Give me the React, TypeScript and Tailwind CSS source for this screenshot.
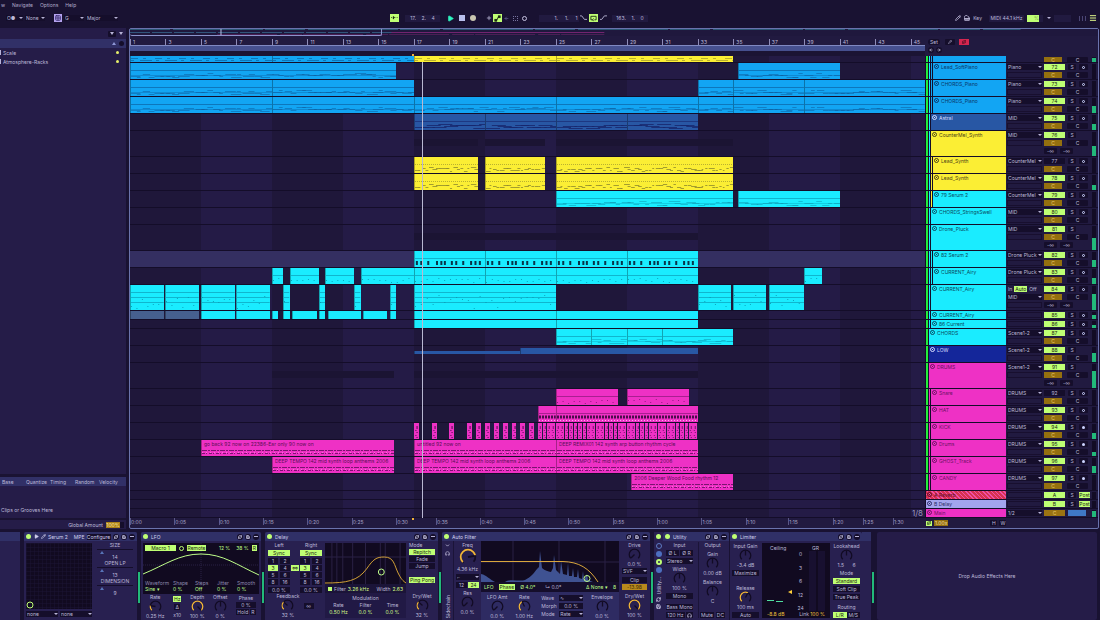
import { clsx } from "clsx";
import {
  ArrowLeft,
  ArrowRight,
  ChevronDown,
  Grid2x2,
  Headphones,
  Menu,
  Pencil,
  Piano,
  Play,
  Plus,
  RefreshCw,
  Repeat,
  Save,
} from "lucide-react";
import type { ReactNode } from "react";

const BARS = 44.8;
const pct = (bars: number) => `${(bars / BARS) * 100}%`;

type Tone = "blue" | "navy" | "yellow" | "cyan" | "pink" | "slate" | "lavender" | "rose" | "deep";
type NoteKind = "lines" | "dots" | "beats" | "melody" | "kick" | "hats" | "audio" | "steps" | "plain";
type ClipData = { from: number; to: number; tone: Tone; kind?: NoteKind; text?: string; thin?: boolean };
type Track = {
  name: string;
  tone: Tone;
  size: "cut" | "sm" | "md" | "lg";
  depth: number;
  parent?: Tone;
  io?: string;
  monitor?: boolean;
  num: string;
  off?: boolean;
  arm?: "midi" | "audio";
  post?: boolean;
  main?: boolean;
  level: number;
  clips: ClipData[];
  ghost?: [number, number][];
  selected?: boolean;
};

const toneBg: Record<Tone, string> = {
  blue: "bg-[#12a5f3]",
  navy: "bg-[#2857a4]",
  yellow: "bg-[#fbee34]",
  cyan: "bg-[#1aecff]",
  pink: "bg-[#ee31c5]",
  slate: "bg-[#46608f]",
  lavender: "bg-[#a3a5ee]",
  rose: "bg-[repeating-linear-gradient(45deg,#ee4fa8_0_1px,#d8324f_1px_3px)]",
  deep: "bg-[#14269a]",
};

const toneInk: Record<Tone, string> = {
  blue: "#0b5a99",
  navy: "#16256c",
  yellow: "#8f8a2c",
  cyan: "#0a93ae",
  pink: "#7c1470",
  slate: "#32447c",
  lavender: "#4a4a92",
  rose: "#7c1440",
  deep: "#0c1668",
};

const toneText: Record<Tone, string> = {
  blue: "text-[#0b3768]",
  navy: "text-[#d7dcff]",
  yellow: "text-[#4a4218]",
  cyan: "text-[#0a4a60]",
  pink: "text-[#6d1263]",
  slate: "text-[#d7dcff]",
  lavender: "text-[#2c2a66]",
  rose: "text-[#5a0a2a]",
  deep: "text-[#d7dcff]",
};

const many = (tone: Tone, kind: NoteKind, spans: [number, number][], text?: string): ClipData[] =>
  spans.map(([from, to]) => ({ from, to, tone, kind, text }));

const synthSpans: [number, number][] = [[17, 20.6], [21, 24.4], [25, 35]];

const tracks: Track[] = [
  { name: "", tone: "blue", size: "cut", depth: 2, parent: "blue", num: "71", level: 0.8,
    clips: [...many("blue", "lines", [[1, 9], [9, 17]]), ...many("yellow", "melody", [[17, 25], [25, 35]])] },
  { name: "Lead_SoftPiano", tone: "blue", size: "md", depth: 2, parent: "blue", io: "Piano", num: "72", arm: "midi", level: 0,
    clips: many("blue", "lines", [[1, 16], [35.25, 41]]) },
  { name: "CHORDS_Piano", tone: "blue", size: "md", depth: 2, parent: "blue", io: "Piano", num: "73", arm: "midi", level: 0,
    clips: many("blue", "lines", [[1, 9], [9, 17], [33, 35], [35, 39], [39, 45.8]]) },
  { name: "CHORDS_Piano", tone: "blue", size: "md", depth: 2, parent: "blue", io: "Piano", num: "74", arm: "midi", level: 0.5,
    clips: many("blue", "lines", [[1, 9], [9, 17], [17, 25], [25, 33], [33, 35], [35, 39], [39, 45.8]]) },
  { name: "Astral", tone: "navy", size: "md", depth: 1, io: "MID", num: "75", arm: "midi", level: 0.4,
    clips: many("navy", "steps", [[17, 21], [21, 25], [25, 29], [29, 33]]) },
  { name: "CounterMel_Synth", tone: "yellow", size: "lg", depth: 1, io: "MID", num: "76", level: 0.4, clips: [],
    ghost: [[17, 20.6], [21, 24.4], [25, 35]] },
  { name: "Lead_Synth", tone: "yellow", size: "md", depth: 2, parent: "yellow", io: "CounterMel", num: "77", off: true, arm: "midi", level: 0,
    clips: many("yellow", "melody", synthSpans) },
  { name: "Lead_Synth", tone: "yellow", size: "md", depth: 2, parent: "yellow", io: "CounterMel", num: "78", arm: "midi", level: 0.35,
    clips: many("yellow", "melody", synthSpans) },
  { name: "79 Serum 2", tone: "cyan", size: "md", depth: 2, parent: "yellow", io: "CounterMel", num: "79", arm: "midi", level: 0,
    clips: many("cyan", "lines", [[25, 35], [35.25, 41]]) },
  { name: "CHORDS_StringsSwell", tone: "cyan", size: "md", depth: 1, io: "MID", num: "80", arm: "midi", level: 0, clips: [] },
  { name: "Drone_Pluck", tone: "cyan", size: "lg", depth: 1, io: "MID", num: "81", level: 0.5, clips: [], ghost: [[17, 25], [25, 33]] },
  { name: "82 Serum 2", tone: "cyan", size: "md", depth: 2, parent: "cyan", io: "Drone Pluck", num: "82", arm: "midi", level: 0.45, selected: true,
    clips: many("cyan", "beats", [[17, 21], [21, 25], [25, 29], [29, 33]]) },
  { name: "CURRENT_Airy", tone: "cyan", size: "md", depth: 2, parent: "cyan", io: "Drone Pluck", num: "83", arm: "midi", level: 0.4,
    clips: many("cyan", "dots", [[9, 9.65], [10, 11.65], [12, 13.65], [14, 17], [17, 21], [21, 25], [25, 29], [29, 33], [39, 40]]) },
  { name: "CURRENT_Airy", tone: "cyan", size: "lg", depth: 1, io: "MID", monitor: true, num: "84", arm: "midi", level: 0.65,
    clips: many("cyan", "dots", [[1, 2.9], [3, 4.9], [5, 6.9], [7, 8.9], [9.65, 10], [11.65, 12], [13.65, 14], [15.65, 16], [17, 25], [33, 34.85], [35, 36.85], [37, 39]]) },
  { name: "CURRENT_Airy", tone: "cyan", size: "sm", depth: 1, num: "85", arm: "midi", level: 0.6,
    clips: [
      ...many("slate", "plain", [[1, 2.9], [3, 4.9]]),
      ...many("cyan", "plain", [[5, 6.9], [7, 8.9], [9, 9.35], [9.65, 10], [10.15, 11.55], [11.65, 12], [12.15, 14], [14.15, 15.5], [15.65, 16], [17, 25], [25, 33]]),
    ] },
  { name: "86 Current", tone: "cyan", size: "sm", depth: 1, num: "86", arm: "midi", level: 0.5,
    clips: many("cyan", "plain", [[17, 25], [25, 33]]) },
  { name: "CHORDS", tone: "cyan", size: "md", depth: 0, io: "Scene1-2", num: "87", arm: "midi", level: 0,
    clips: many("cyan", "lines", [[25, 27], [27, 29], [29, 31], [31, 35]]) },
  { name: "LOW", tone: "deep", size: "md", depth: 0, io: "Scene1-2", num: "88", level: 0.6,
    clips: [{ from: 17, to: 23, tone: "navy", thin: true }, { from: 23, to: 33, tone: "navy", thin: true }] },
  { name: "DRUMS", tone: "pink", size: "lg", depth: 0, io: "Scene1-2", num: "91", level: 0.7, clips: [],
    ghost: [[9, 15.9], [17, 21], [21, 25], [25, 33]] },
  { name: "Snare", tone: "pink", size: "md", depth: 1, parent: "pink", io: "DRUMS", num: "92", off: true, arm: "midi", level: 0,
    clips: many("pink", "dots", [[25, 28.5], [29, 32.5]]) },
  { name: "HAT", tone: "pink", size: "md", depth: 1, parent: "pink", io: "DRUMS", num: "93", arm: "midi", level: 0,
    clips: many("pink", "hats", [[24, 25], [25, 33]]) },
  { name: "KICK", tone: "pink", size: "md", depth: 1, parent: "pink", io: "DRUMS", num: "94", arm: "audio", level: 0.4,
    clips: [
      ...[17, 18, 19, 20, 20.5, 21, 21.5, 22, 22.5, 23, 23.5].map((b): ClipData => ({ from: b, to: b + 0.28, tone: "pink", kind: "kick" })),
      ...Array.from({ length: 36 }, (_, i): ClipData => ({ from: 24 + i / 4, to: 24.21 + i / 4, tone: "pink", kind: "kick" })),
    ] },
  { name: "Drums", tone: "pink", size: "md", depth: 1, parent: "pink", io: "DRUMS", num: "95", arm: "audio", level: 0.3,
    clips: [
      { from: 5, to: 15.9, tone: "pink", kind: "audio", text: "go back 92 now on 22386-Ear only 90 now on" },
      { from: 17, to: 25, tone: "pink", kind: "audio", text: "untitled 92 now on" },
      { from: 25, to: 33, tone: "pink", kind: "audio", text: "DEEP REMIX01 142 synth arp button rhythm cycle" },
    ] },
  { name: "GHOST_Track", tone: "pink", size: "md", depth: 1, parent: "pink", io: "DRUMS", num: "96", arm: "audio", level: 0.5,
    clips: many("pink", "audio", [[9, 15.9], [17, 25], [25, 33]], "DEEP TEMPO 142 mid synth loop anthems 2006") },
  { name: "CANDY", tone: "pink", size: "md", depth: 1, parent: "pink", io: "DRUMS", num: "97", arm: "audio", level: 0,
    clips: many("pink", "audio", [[29.25, 35]], "2006 Deeper Wood Food rhythm 12") },
  { name: "A Reverb", tone: "rose", size: "sm", depth: 0, num: "A", post: true, level: 0, clips: [] },
  { name: "B Delay", tone: "lavender", size: "sm", depth: 0, num: "B", post: true, level: 0, clips: [] },
  { name: "Main", tone: "pink", size: "sm", depth: 0, io: "1/2", num: "C", main: true, level: 0.8, clips: [] },
];

const rowHeight = { cut: "h-[7px] items-end", sm: "h-[9px]", md: "h-[17px]", lg: "h-[26px]" };

const timeMarks: [string, number][] = [
  ["0:00", 0], ["0:05", 2.5], ["0:10", 5], ["0:15", 7.5], ["0:20", 10], ["0:25", 12.5], ["0:30", 15],
  ["0:35", 17.25], ["0:40", 19.75], ["0:45", 22.2], ["0:50", 24.7], ["0:55", 27.2], ["1:00", 29.7],
  ["1:05", 32.2], ["1:10", 34.7], ["1:15", 37.1], ["1:20", 39.6], ["1:25", 41.3], ["1:30", 43],
];

// deterministic noise, so notes stay in place between renders
const noise = (n: number) => {
  const v = Math.sin(n * 127.1 + 11.7) * 43758.5453;
  return v - Math.floor(v);
};

function Notes({ clip, tall }: { clip: ClipData; tall: boolean }) {
  const ink = toneInk[clip.tone];
  const span = clip.to - clip.from;
  const x = (b: number) => `${(b / span) * 100}%`;
  const items: ReactNode[] = [];
  const bottom = tall ? 23 : 14;

  if (clip.kind === "beats") {
    [0.05, 0.3, 0.7, 1.2, 1.45, 1.65, 2.05, 2.3, 2.7, 3.15, 3.4, 3.65].forEach((b) =>
      items.push(<rect key={b} x={x(b)} y={10} width={2} height={4} fill="#083349" />),
    );
  } else if (clip.kind === "kick") {
    [3, 7, 9, 12, 14].forEach((y, i) =>
      items.push(<rect key={y} x={i % 2 ? "20%" : "45%"} y={y} width="35%" height={y === 3 ? 3 : 1} fill={ink} opacity={0.8} />),
    );
  } else if (clip.kind === "hats") {
    items.push(<line key="h" x1={0} x2="100%" y1={11} y2={11} stroke="#4a0d4c" strokeWidth={3} strokeDasharray="2 1" />);
    items.push(<line key="i" x1={0} x2="100%" y1={14.5} y2={14.5} stroke="#ffa9ee" strokeDasharray="1 2" />);
  } else if (clip.kind === "audio") {
    items.push(<line key="a" x1={0} x2="100%" y1={10.5} y2={10.5} stroke={ink} strokeDasharray="5 1 2 1" />);
    items.push(<line key="b" x1={0} x2="100%" y1={13.5} y2={13.5} stroke={ink} strokeDasharray="3 1 1 2" />);
    items.push(<line key="c" x1={0} x2="100%" y1={12.5} y2={12.5} stroke="#ff9be8" opacity={0.6} strokeDasharray="1 3" />);
  } else {
    const count = Math.round(span * (clip.kind === "melody" ? 5 : 3));
    for (let i = 0; i < count; i++) {
      const r = noise(i + clip.from * 7);
      const len = clip.kind === "dots" ? 1 : clip.kind === "steps" ? 14 : 3 + noise(i * 3) * 9;
      items.push(
        <rect
          key={i}
          x={x((i / count) * span)}
          y={Math.round(10 + r * (bottom - 10))}
          width={clip.kind === "melody" ? len / 2 : len}
          height={1}
          fill={ink}
          opacity={clip.kind === "lines" ? 0.5 : 0.8}
        />,
      );
    }
    if (clip.kind === "dots" && tall)
      [12, 17].forEach((y) => items.push(<line key={`t${y}`} x1={0} x2="100%" y1={y + 0.5} y2={y + 0.5} stroke={ink} opacity={0.6} />));
    if (clip.kind === "lines")
      items.push(<line key="base" x1={0} x2="100%" y1={12.5} y2={12.5} stroke={ink} opacity={0.35} />);
  }

  return (
    <svg className="absolute inset-0 h-full w-full" aria-hidden="true">
      {clip.kind !== "kick" && clip.kind !== "audio" && (
        <line x1={0} x2="100%" y1={7.5} y2={7.5} stroke={ink} opacity={0.6} strokeDasharray={clip.kind === "melody" ? "1 1" : undefined} />
      )}
      {items}
    </svg>
  );
}

function Clip({ clip, size }: { clip: ClipData; size: Track["size"] }) {
  return (
    <div
      className={clsx(
        "absolute overflow-hidden",
        clip.kind !== "kick" && "border-l border-black/30",
        clip.thin ? (clip.from > 20 ? "top-[2px] h-[6px]" : "top-[5px] h-[3px]") : "inset-y-0",
        toneBg[clip.tone],
      )}
      style={{ left: pct(clip.from - 1), width: pct(clip.to - clip.from) }}
    >
      {clip.kind && clip.kind !== "plain" && size !== "cut" && <Notes clip={clip} tall={size === "lg"} />}
      {size === "cut" && (
        <svg className="absolute inset-0 h-full w-full" aria-hidden="true">
          <line x1={0} x2="100%" y1={2.5} y2={2.5} stroke={toneInk[clip.tone]} opacity={0.6} strokeDasharray="7 5 3 9" />
          <line x1={0} x2="100%" y1={4.5} y2={4.5} stroke={toneInk[clip.tone]} opacity={0.6} strokeDasharray="3 6 12 4" />
        </svg>
      )}
      {clip.text && (
        <span className="relative block px-[2px] leading-[8px] whitespace-nowrap text-[#5b0f55]">{clip.text}</span>
      )}
    </div>
  );
}

const box = "flex h-[6px] items-center justify-center rounded-[1px] bg-[#150e2b]";

function TrackMixer({ t }: { t: Track }) {
  const full = t.size === "md" || t.size === "lg";
  return (
    <div className={clsx("flex w-[56px] shrink-0 gap-[2px] px-[2px]", t.size !== "cut" && "pt-px")}>
      <div className="flex flex-1 flex-col gap-[2px]">
        {t.size !== "cut" && (
          <div className="flex gap-[3px]">
            <button
              className={clsx(
                "flex h-[6px] w-[21px] items-center justify-center",
                t.main ? "bg-[#9b7412] text-[#e7c76a]" : t.off ? "bg-[#150e2b] text-[#b7b2d6]" : "bg-[#bfff74] text-[#1c2a12]",
              )}
            >
              {t.num}
            </button>
            {t.main ? (
              <button className="h-[6px] w-[18px] bg-[#3f78c6]" aria-label="Preview volume" />
            ) : (
              <button className={clsx(box, "w-[8px]")}>S</button>
            )}
            {t.arm && (
              <button className={clsx(box, "w-[9px]")} aria-label={`Arm ${t.name}`}>
                <i className={clsx("rounded-full", t.arm === "audio" ? "size-[3px] bg-[#cdd5ff]" : "size-[3px] border border-[#cdd5ff]")} />
              </button>
            )}
            {t.post && <button className="flex h-[6px] w-[11px] items-center justify-center bg-[#bfff74] text-[#1c2a12]">Post</button>}
          </div>
        )}
        {(full || t.size === "cut") && (
          <div className={clsx("flex gap-[5px]", t.size === "cut" && "h-[5px] overflow-hidden")}>
            <button className="flex h-[6px] w-[18px] items-center justify-center bg-[#94700f] text-[#e5c566]">C</button>
            <button className={clsx(box, "w-[21px]")}>C</button>
          </div>
        )}
        {t.size === "lg" && (
          <div className="flex gap-[3px]">
            <span className={clsx(box, "w-[13px]")}>-∞</span>
            <span className={clsx(box, "w-[13px]")}>-∞</span>
          </div>
        )}
      </div>
      <div className="flex w-[4px] flex-col justify-end bg-[#120c25]">
        <div className="bg-[#22b97a]" style={{ height: `${t.level * 100}%` }} />
      </div>
    </div>
  );
}

function Picker({ label, value, className }: { label: string; value: string; className?: string }) {
  return (
    <label className={clsx("relative flex h-[6px] min-w-0 items-center justify-between bg-[#150e2b] pl-px", className)}>
      <span className="sr-only">{label}</span>
      <select className="h-[8px] min-w-0 flex-1 appearance-none leading-[8px] outline-none">
        <option>{value}</option>
      </select>
      <i className="shrink-0 border-x-2 border-t-2 border-x-transparent border-t-[#b7b2d6]" />
    </label>
  );
}

function TrackRow({ t }: { t: Track }) {
  return (
    <div className={clsx("flex border-b border-[#140d29]", rowHeight[t.size])}>
      <div className={clsx("relative h-full min-w-0 flex-1 overflow-hidden", t.selected && "bg-[#342f61]")}>
        {t.ghost?.map(([from, to]) => (
          <div
            key={from}
            className="absolute top-1/3 h-[7px] bg-[#1b1433]"
            style={{ left: pct(from - 1), width: pct(to - from) }}
          />
        ))}
        {t.clips.map((clip) => (
          <Clip key={clip.from} clip={clip} size={t.size} />
        ))}
      </div>
      <div className="flex h-full w-[81px] shrink-0 gap-px bg-[#140d29] pl-px">
        {!t.post && !t.main && <div className="w-[2px] bg-[#22ee3c]" />}
        {t.depth > 0 && <div className={clsx("w-px", toneBg[t.parent === "pink" ? "pink" : "cyan"])} />}
        {t.depth > 1 && <div className={clsx("w-px", toneBg[t.parent ?? "cyan"])} />}
        <div
          className={clsx(
            "flex min-w-0 flex-1 items-start gap-[2px] pt-px pl-px",
            toneBg[t.tone],
            toneText[t.tone],
          )}
        >
          {t.name && (
            <>
              <button className="flex size-[5px] shrink-0 items-center justify-center rounded-full border border-current" aria-label={`Fold ${t.name}`}>
                <i className="size-px bg-current" />
              </button>
              <span className="whitespace-nowrap">{t.name}</span>
            </>
          )}
        </div>
      </div>
      <div className="flex w-[36px] shrink-0 flex-col gap-[2px] pt-px pl-px">
        {t.monitor && (
          <div className="flex h-[6px] items-center gap-px">
            <button className="px-px">In</button>
            <button className="bg-[#bfff74] px-px text-[#1c2a12]">Auto</button>
            <button className="px-px">Off</button>
          </div>
        )}
        {t.io ? (
          <Picker label={`${t.name} output`} value={t.io} />
        ) : (
          t.size === "sm" && <div className="h-[6px] border border-[#180f2f]" />
        )}
        {(t.size === "md" || t.size === "lg") && <div className="h-[6px] border border-[#180f2f]" />}
      </div>
      <TrackMixer t={t} />
    </div>
  );
}

function Overview() {
  return (
    <div className="relative h-[7px] shrink-0 bg-[#1f183d]">
      <svg className="absolute inset-0 h-full w-full" aria-hidden="true">
        <line x1="0" x2="92%" y1="0.5" y2="0.5" stroke="#2b5674" strokeDasharray="40 3 90 2" />
        <line x1="0" x2="28%" y1="3.5" y2="3.5" stroke="#31557c" strokeDasharray="20 2" />
        <line x1="27%" x2="49%" y1="3.5" y2="3.5" stroke="#722470" />
        <line x1="9%" x2="49%" y1="5.5" y2="5.5" stroke="#4b1f55" strokeDasharray="60 3 22 1" />
        <line x1="9.4%" x2="9.4%" y1="0" y2="7" stroke="#b9c0e8" />
      </svg>
      <div className="absolute inset-y-0 left-0 w-[26%] rounded-b-[2px] border-r border-b border-[#8b93cc]" />
    </div>
  );
}

function Arrangement() {
  return (
    <main className="flex min-w-0 flex-1 flex-col rounded-[2px] border border-[#6a73ad] bg-[#211a40]">
      <Overview />
      <div className="flex shrink-0">
        <div className="min-w-0 flex-1">
          <div className="relative h-[9px]">
            {Array.from({ length: 23 }, (_, i) => (
              <span
                key={i}
                className="absolute top-[3px] h-[6px] border-l border-[#8f8cb8] pl-[2px] leading-[7px]"
                style={{ left: pct(i * 2) }}
              >
                {i * 2 + 1}
              </span>
            ))}
          </div>
          <div className="h-[6px] border-t border-[#8089c2] bg-[#46508f]" />
          <div className="relative h-[5px] bg-[#1b1434]">
            <i className="absolute bottom-0 size-[2px] bg-[#f0b23a]" style={{ left: pct(15.9) }} />
          </div>
        </div>
        <div className="flex w-[173px] flex-col gap-[2px] pt-[3px] pl-[3px]">
          <div className="flex gap-[4px]">
            <button className={clsx(box, "w-[12px] rounded-full")}>Set</button>
            <button className={clsx(box, "ml-px w-[10px]")} aria-label="Draw">
              <Pencil size={4} strokeWidth={3} />
            </button>
            <button className="flex h-[6px] w-[10px] items-center justify-center bg-[#d4264f] text-[#3b0a1c]" aria-label="Automation">
              <Repeat size={4} strokeWidth={4} />
            </button>
          </div>
          <div className="flex gap-[2px]">
            <button className={clsx(box, "w-[6px] rounded-full")} aria-label="Previous locator">
              <ArrowLeft size={4} strokeWidth={4} />
            </button>
            <button className={clsx(box, "w-[6px] rounded-full")} aria-label="Next locator">
              <ArrowRight size={4} strokeWidth={4} />
            </button>
          </div>
        </div>
      </div>

      <div className="relative">
        <div className="absolute inset-y-0 right-[173px] left-0 bg-[repeating-linear-gradient(90deg,#1f173a_0_8.93%,#241b46_8.93%_17.86%)]" />
        <div className="relative">
          {tracks.map((t, i) => (
            <TrackRow key={i} t={t} />
          ))}
        </div>
        <div className="pointer-events-none absolute inset-y-0 right-[173px] left-0">
          <div className="absolute top-[6px] bottom-0 w-px bg-[#b9b8d2]" style={{ left: pct(16.45) }} />
          <span className="absolute right-[2px] bottom-0 text-[8px] leading-[10px] text-[#9a97bd]">1/8</span>
        </div>
      </div>

      <div className="flex h-[10px] shrink-0">
        <div className="relative min-w-0 flex-1">
          {timeMarks.map(([label, at]) => (
            <span
              key={label}
              className="absolute top-0 h-[7px] border-l border-[#5b5786] leading-[8px] text-[#a5a1c6]"
              style={{ left: pct(at) }}
            >
              {label}
            </span>
          ))}
          <i className="absolute top-0 size-[2px] bg-[#f0b23a]" style={{ left: pct(15.9) }} />
        </div>
        <div className="flex w-[173px] items-center gap-[2px] pl-px">
          <button className="flex h-[5px] w-[6px] items-center justify-center bg-[#bfff74] text-[#1c2a12]" aria-label="Follow">
            <Repeat size={4} strokeWidth={4} />
          </button>
          <span className="bg-[#94700f] px-px leading-[6px] text-[#f0dca0]">1.00x</span>
          <button className={clsx(box, "ml-[40px] w-[7px]")}>H</button>
          <button className={clsx(box, "w-[7px]")}>W</button>
        </div>
      </div>
    </main>
  );
}

function Browser() {
  return (
    <aside className="flex w-[126px] shrink-0 flex-col bg-[#251c48]">
      <div className="flex h-[11px] items-center justify-end gap-[3px] pr-[3px]">
        <button className={clsx(box, "w-[8px]")} aria-label="Filter">
          <i className="border-x-2 border-t-[3px] border-x-transparent border-t-[#b7b2d6]" />
        </button>
        <i className="border-x-2 border-t-[3px] border-x-transparent border-t-[#b7b2d6]" />
      </div>
      <div className="flex h-[9px] items-center justify-end gap-[3px] bg-[#313067] pr-[2px]">
        <i className="border-x-2 border-b-[3px] border-x-transparent border-b-[#8f97d6]" />
        <i className="size-[5px] rounded-full bg-[#150e2b]" />
      </div>
      {["Scale", "Atmosphere-Racks"].map((name) => (
        <div key={name} className="flex h-[9px] items-center gap-[2px] pr-[7px]">
          <i className="h-[5px] w-px bg-[#b7b2d6]" />
          <span className="flex-1">{name}</span>
          <i className="size-[3px] rounded-full bg-[#e6f06a]" />
        </div>
      ))}
      <div className="flex-1" />
      <div className="h-[3px] bg-[#1a1333]" />
      <div className="flex h-[9px] items-center bg-[#313067] pl-[2px]">
        <span className="w-[24px]">Base</span>
        <span className="w-[24px]">Quantize</span>
        <span className="w-[25px]">Timing</span>
        <span className="w-[24px]">Random</span>
        <span>Velocity</span>
      </div>
      <p className="flex h-[32px] items-end pb-[5px] pl-px">Clips or Grooves Here</p>
      <div className="flex h-[11px] items-center justify-end gap-[3px] border-t-2 border-[#1a1333] pr-[2px]">
        <span>Global Amount</span>
        <span className="w-[18px] bg-[#150e2b]">
          <span className="block w-[14px] bg-[#a9801a] text-center leading-[6px] text-[#ffe9a0]">100%</span>
        </span>
      </div>
    </aside>
  );
}

const tinyIcon = "flex h-[8px] w-[9px] items-center justify-center";
const lit = "bg-[#bfff74] text-[#1c2a12]";

function Transport() {
  return (
    <header className="shrink-0">
      <nav className="flex h-[10px] items-center gap-[7px] pl-px text-[#b0abcb]">
        <a href="#view">w</a>
        <a href="#navigate">Navigate</a>
        <a href="#options">Options</a>
        <a href="#help">Help</a>
      </nav>
      <div className="flex h-[18px] items-center pb-[2px]">
        <div className="flex w-[390px] shrink-0 items-center gap-[2px] pl-[6px]">
          <Picker label="Metronome" value="O●" className="w-[17px]" />
          <Picker label="Quantization" value="None" className="w-[20px]" />
          <button className="ml-[7px] flex size-[8px] items-center justify-center bg-[#b5a3f0] text-[#2a1d5c]" aria-label="Scale">
            <Grid2x2 size={6} strokeWidth={3} />
          </button>
          <Picker label="Root note" value="G" className="w-[20px]" />
          <Picker label="Scale name" value="Major" className="w-[32px]" />
        </div>
        <button className={clsx(tinyIcon, lit)} aria-label="Follow playback">
          <svg viewBox="0 0 8 6" className="w-[7px]" fill="currentColor">
            <path d="M0 2.5h1v1H0zM2 2l1.500-1v1.500H5v1H3.500V5L2 4zM6.500 2.500h1v1h-1z" />
          </svg>
        </button>
        <span className="ml-[6px] w-[35px] bg-[#211a40] text-center leading-[7px] whitespace-pre">17.    2.    4</span>
        <button className="ml-[7px]" aria-label="Play">
          <Play size={7} fill="#2ff5c0" stroke="#2ff5c0" />
        </button>
        <button className="ml-[5px] size-[6px] bg-[#b9c0ee]" aria-label="Stop" />
        <button className="ml-[5px] size-[6px] rounded-full bg-[#c9c6b0]" aria-label="Record" />
        <button className={clsx(tinyIcon, "ml-[8px]")} aria-label="Overdub">
          <Plus size={6} strokeWidth={3} />
        </button>
        <button className={clsx(tinyIcon, lit)} aria-label="Automation arm">
          <svg viewBox="0 0 8 8" className="size-[7px]" fill="none" stroke="currentColor">
            <path d="M1 6.5h2L5 2h2" />
            <rect x="1" y="5" width="2" height="2" fill="currentColor" />
            <rect x="5" y="1" width="2" height="2" fill="currentColor" />
          </svg>
        </button>
        <button className={tinyIcon} aria-label="Re-enable automation">
          <ArrowLeft size={5} strokeWidth={3} className="text-[#6a669a]" />
        </button>
        <button className={tinyIcon} aria-label="Capture">
          <i className="size-[5px] border border-dotted border-[#77739f]" />
        </button>
        <button className={tinyIcon} aria-label="Session record">
          <i className="size-[5px] rounded-full border border-[#c5c1e0]" />
        </button>
        <span className="ml-[10px] w-[40px] bg-[#211a40] text-right leading-[7px] whitespace-pre">1.     1.     1 </span>
        <button className={tinyIcon} aria-label="Punch in">
          <svg viewBox="0 0 8 6" className="w-[7px]" fill="none" stroke="currentColor">
            <path d="M0 1h2l3 4h3" />
          </svg>
        </button>
        <button className={clsx(tinyIcon, lit, "ml-px")} aria-label="Loop">
          <svg viewBox="0 0 8 8" className="size-[7px]" fill="none" stroke="currentColor">
            <path d="M3 5.5H1v-4h6v4H5M4 4l-1 1.5L4 7" />
          </svg>
        </button>
        <button className={clsx(tinyIcon, "ml-px")} aria-label="Punch out">
          <svg viewBox="0 0 8 6" className="w-[7px]" fill="none" stroke="currentColor">
            <path d="M0 5h2l3-4h3" />
          </svg>
        </button>
        <span className="ml-[4px] w-[36px] bg-[#211a40] text-center leading-[7px] whitespace-pre">163.    1.    0</span>
        <div className="ml-auto flex items-center gap-[3px] pr-[3px]">
          <Pencil size={6} strokeWidth={3} />
          <Piano size={6} strokeWidth={3} />
          <button>Key</button>
          <span className="ml-[4px] w-[35px] bg-[#211a40] text-center leading-[7px] whitespace-nowrap">MIDI 44.1 kHz</span>
          <span className="w-[16px] bg-[#211a40]">
            <span className="block w-[12px] bg-[#bfff74] pl-[7px] leading-[7px] text-[#7da845]">%</span>
          </span>
          <i className="ml-px border-x-2 border-t-2 border-x-transparent border-t-[#b7b2d6]" />
          <span className="h-[7px] w-[17px] bg-[#211a40]" />
          <span className="ml-[5px] flex gap-[2px]">
            <i className="h-[5px] w-px bg-[#4b4675]" />
            <i className="h-[5px] w-px bg-[#4b4675]" />
            <i className="h-[5px] w-px bg-[#4b4675]" />
          </span>
          <Menu size={8} strokeWidth={3} className="text-[#dcf58a]" />
        </div>
      </div>
    </header>
  );
}

function Knob({ label, value, amount, warm, large }: { label: string; value?: string; amount: number; warm?: boolean; large?: boolean }) {
  const angle = ((135 + 270 * amount) * Math.PI) / 180;
  return (
    <label className="relative flex flex-col items-center leading-[6px] whitespace-nowrap">
      <span>{label}</span>
      <input type="range" defaultValue={amount * 100} className="sr-only" />
      <svg viewBox="0 0 16 16" className={large ? "size-[18px]" : "size-[13px]"} fill="none" aria-hidden="true">
        <circle cx="8" cy="8" r="6.5" stroke="#120b24" strokeWidth="1.6" pathLength="100" strokeDasharray="75 25" transform="rotate(135 8 8)" />
        {warm && (
          <circle cx="8" cy="8" r="6.5" stroke="#f2b63c" strokeWidth="1.6" pathLength="100" strokeDasharray={`${75 * amount} 100`} transform="rotate(135 8 8)" />
        )}
        <line x1="8" y1="8" x2={8 + 6 * Math.cos(angle)} y2={8 + 6 * Math.sin(angle)} stroke="#120b24" strokeWidth="1.6" />
      </svg>
      {value && <span className="whitespace-pre">{value}</span>}
    </label>
  );
}

function Dots() {
  return (
    <div className="ml-auto flex gap-[2px]">
      {[RefreshCw, Save].map((Icon, i) => (
        <button key={i} className="flex size-[6px] items-center justify-center rounded-full bg-[#150e2b]" aria-label={i ? "Save preset" : "Hot-swap preset"}>
          <Icon size={4} strokeWidth={4} />
        </button>
      ))}
      <button className="flex size-[6px] items-center justify-center rounded-full bg-[#150e2b]" aria-label="Device menu">
        <i className="h-px w-[4px] bg-[#b7b2d6]" />
      </button>
    </div>
  );
}

function Device({ title, className, extra, children }: { title: string; className: string; extra?: ReactNode; children: ReactNode }) {
  return (
    <section className={clsx("flex shrink-0 flex-col rounded-t-[2px] bg-[#282050]", className)}>
      <header className="flex h-[9px] shrink-0 items-center gap-[2px] rounded-t-[2px] bg-[#303067] px-[2px] whitespace-nowrap text-[#d2d0ee]">
        <button className="mr-px size-[5px] shrink-0 rounded-full bg-[#bfff74]" aria-label={`${title} on`} />
        {extra ?? <span>{title}</span>}
        <Dots />
      </header>
      {children}
    </section>
  );
}

function Meter({ quiet }: { quiet?: boolean }) {
  return (
    <div className="flex w-[4px] shrink-0 flex-col px-px pt-[40px]">
      {!quiet && <div className="h-[31px] bg-[#22b97a]" />}
    </div>
  );
}

function Key({ children, on, className }: { children: ReactNode; on?: boolean; className?: string }) {
  return (
    <button className={clsx("flex h-[6px] items-center justify-center px-px whitespace-nowrap", on ? lit : "bg-[#150e2b]", className)}>
      {children}
    </button>
  );
}

function Serum() {
  return (
    <Device
      title="Serum 2"
      className="w-[113px]"
      extra={
        <>
          <Play size={5} fill="currentColor" />
          <Pencil size={5} strokeWidth={3} />
          <span>Serum 2</span>
          <span className="ml-[4px]">MPE</span>
          <Key className="w-[24px]">Configure</Key>
        </>
      }
    >
      <div className="flex flex-1 gap-[5px] px-[2px] pt-[2px]">
        <div className="flex w-[66px] flex-col gap-[2px]">
          <svg viewBox="0 0 66 66" className="h-[66px] w-full bg-[#110a20]" aria-hidden="true">
            <defs>
              <pattern id="pad" width="4" height="4" patternUnits="userSpaceOnUse">
                <path d="M4 0H0V4" fill="none" stroke="#1c1434" />
              </pattern>
            </defs>
            <rect width="66" height="66" fill="url(#pad)" />
            <circle cx="4" cy="62" r="3" fill="none" stroke="#bfff74" />
          </svg>
          <div className="flex gap-[2px]">
            <Picker label="X axis" value="none" className="flex-1" />
            <Picker label="Y axis" value="none" className="flex-1" />
          </div>
        </div>
        <div className="flex w-[36px] flex-col items-stretch text-center">
          {[["SIZE", "14"], ["OPEN LP", "13"], ["DIMENSION", "9"]].map(([name, v]) => (
            <div key={name} className="flex h-[18px] flex-col">
              <span className="leading-[5px]">{name}</span>
              <i className="mt-px h-px bg-[#150e2b]" />
              <i className="mt-px ml-[3px] w-0 border-x-2 border-b-[3px] border-x-transparent border-b-[#5874b8]" />
              <span className="leading-[6px]">{v}</span>
            </div>
          ))}
        </div>
      </div>
    </Device>
  );
}

function Lfo() {
  return (
    <Device title="LFO" className="w-[120px]">
      <div className="relative mx-[2px] mt-[2px] flex h-[51px] shrink-0 flex-col justify-between bg-[#110a20] p-[2px]">
        <svg viewBox="0 0 116 51" preserveAspectRatio="none" className="absolute inset-0 h-full w-full" fill="none" aria-hidden="true">
          <path d="M0 22H116M58 0V51" stroke="#2a2145" strokeDasharray="1 1" />
          <path d="M0 31C22 22 36 11 58 11S94 22 116 32" stroke="#bfff8a" />
        </svg>
        <div className="relative flex items-center gap-[3px]">
          <Key on className="w-[31px]">Macro 1</Key>
          <i className="size-[5px] rounded-full border border-[#bfff74]" />
          <Key on className="w-[19px]">Remote</Key>
          <span className="ml-auto text-[#bfff8a]">12 %</span>
          <span className="ml-[3px] text-[#bfff8a]">38 %</span>
          <Key on>R</Key>
        </div>
        <div className="relative grid grid-cols-[28px_22px_22px_20px_20px] leading-[6px]">
          {[["Waveform", "Sine ▾"], ["Shape", "0 %"], ["Steps", "Off"], ["Jitter", "0 %"], ["Smooth", "0 %"]].map(([k, v]) => (
            <div key={k} className="flex flex-col">
              <span className="text-[#8d88ae]">{k}</span>
              <span className="text-[#bfff8a]">{v}</span>
            </div>
          ))}
        </div>
      </div>
      <div className="flex justify-between px-[5px]">
        <Knob label="Rate" value="0.25 Hz" amount={0.2} warm />
        <div className="flex flex-col items-center gap-[2px] pt-[2px]">
          <Key on>Hz</Key>
          <Key>Δ</Key>
          <span className="leading-[6px]">x10</span>
        </div>
        <Knob label="Depth" value="100 %" amount={1} warm />
        <Knob label="Offset" value="0 %" amount={0.5} />
        <div className="flex w-[20px] flex-col items-center gap-px pt-px">
          <span className="leading-[6px]">Phase</span>
          <Key className="w-full">0 %</Key>
          <div className="flex gap-px">
            <Key>Hold</Key>
            <Key>R</Key>
          </div>
        </div>
      </div>
    </Device>
  );
}

function DelaySide({ name }: { name: string }) {
  return (
    <div className="flex w-[22px] flex-col gap-[2px] text-center">
      <span className="leading-[5px]">{name}</span>
      <Key on>Sync</Key>
      <div className="grid grid-cols-2 gap-x-[2px] gap-y-px">
        {["1", "2", "3", "4", "5", "6", "8", "16"].map((n) => (
          <Key key={n} on={n === "3"}>{n}</Key>
        ))}
      </div>
      <Key>0.0 %</Key>
    </div>
  );
}

function Delay() {
  return (
    <Device title="Delay" className="w-[173px]">
      <div className="flex flex-1 gap-[3px] px-[3px] pt-[2px] pb-[2px]">
        <div className="flex w-[54px] flex-col justify-between">
          <div className="flex items-center justify-between">
            <DelaySide name="Left" />
            <Key on className="w-[8px]">⇔</Key>
            <DelaySide name="Right" />
          </div>
          <div className="flex items-center justify-center gap-[4px]">
            <Knob label="Feedback" value="32 %" amount={0.32} warm />
            <Key className="w-[10px]">∞</Key>
          </div>
        </div>
        <div className="flex flex-1 flex-col">
          <svg viewBox="0 0 82 41" preserveAspectRatio="none" className="h-[41px] w-full bg-[#110a20]" fill="none" aria-hidden="true">
            <path d="M7 0V41M12 0V41M18 0V41M28 0V41M41 0V41M56 0V41M61 0V41M76 0V41M0 14H82" stroke="#2a2145" />
            <path d="M0 40C22 40 33 38 42 26C49 16 52 14 60 14C70 14 70 22 74 30C77 36 79 38 82 40" stroke="#d2a035" />
            <circle cx="57" cy="29" r="3" stroke="#bfff8a" />
          </svg>
          <div className="flex h-[9px] items-center gap-[2px] bg-[#1b1438] px-[3px]">
            <i className="size-[4px] bg-[#bfff74]" />
            <span>Filter</span>
            <span className="text-[#d8ff8a]">3.26 kHz</span>
            <span className="ml-auto">Width</span>
            <span className="text-[#d8ff8a]">2.63</span>
          </div>
          <div className="flex flex-1 flex-col gap-px bg-[#211945] pt-[2px] text-center leading-[6px]">
            <span>Modulation</span>
            <div className="grid grid-cols-3">
              {[["Rate", "0.50 Hz"], ["Filter", "0.0 %"], ["Time", "0.0 %"]].map(([k, v]) => (
                <div key={k} className="flex flex-col gap-px">
                  <span>{k}</span>
                  <span className="text-[#d8ff8a]">{v}</span>
                </div>
              ))}
            </div>
          </div>
        </div>
        <div className="flex w-[26px] flex-col gap-px">
          <span className="leading-[5px]">Mode</span>
          <Key on>Repitch</Key>
          <Key>Fade</Key>
          <Key>Jump</Key>
          <Key on className="mt-[7px]">Ping Pong</Key>
          <div className="mt-auto">
            <Knob label="Dry/Wet" value="32 %" amount={0.32} warm />
          </div>
        </div>
      </div>
    </Device>
  );
}

function AutoFilter() {
  return (
    <Device title="Auto Filter" className="w-[208px]">
      <div className="flex flex-1">
        <div className="flex w-[11px] flex-col items-center gap-[3px] pt-[2px] pb-[2px]">
          <ChevronDown size={5} strokeWidth={4} />
          <Headphones size={5} strokeWidth={3} />
          <span className="mt-auto rotate-180 leading-[6px] [writing-mode:vertical-rl]">Sidechain</span>
        </div>
        <div className="flex w-[28px] flex-col items-stretch gap-[2px] border-l border-[#1b1438] px-[2px] pt-px">
          <Knob label="Freq" value="4.36 kHz" amount={0.8} warm large />
          <Picker label="Filter type" value="⌐" />
          <div className="flex gap-px">
            <Key className="flex-1">12</Key>
            <Key on className="flex-1">24</Key>
          </div>
          <Knob label="Res" value="0.0 %" amount={0} />
        </div>
        <div className="flex min-w-0 flex-1 flex-col">
          <svg viewBox="0 0 138 41" preserveAspectRatio="none" className="h-[41px] w-full bg-[#110a20]" aria-hidden="true">
            <path d="M32 0V41M78 0V41M124 0V41M0 21H138" stroke="#2a2145" />
            <path
              d="M0 33C6 34 9 39 14 41L24 41C30 37 38 41 44 39C50 36 52 33 56 28L58 26L59 10L61 27C64 30 67 30 70 31L72 27L73 14L75 29L79 33L80 20L82 33L86 34L87 22L88 35L91 35L92 27L93 36L96 36L97 28L98 37L101 38L102 30L103 39L106 33L107 39L112 41L0 41Z"
              fill="#3f5292"
            />
            <path d="M0 20.500H82C98 21 108 27 117 41" stroke="#d9a63c" fill="none" />
            <circle cx="106" cy="37.500" r="3" stroke="#bfff8a" fill="none" />
          </svg>
          <div className="flex h-[10px] items-center gap-[5px] bg-[#150e2b] px-[3px] text-[#bfff8a]">
            <span>LFO</span>
            <Key on>Phase</Key>
            <span>Ø 4.0°</span>
            <span className="ml-[5px] text-[#b7b2d6]">↳ 0.0°</span>
            <span className="ml-auto">Δ None ▾</span>
            <span>8</span>
          </div>
          <div className="flex flex-1 items-center justify-between bg-[#2e2b62] px-[6px]">
            <Knob label="LFO Amt" value="0.0 %" amount={0} />
            <Knob label="Rate" value="1.00 Hz" amount={0.4} warm />
            <div className="grid grid-cols-[16px_24px] gap-x-[2px] gap-y-[2px] leading-[6px]">
              <span>Wave</span>
              <Picker label="Wave" value="∿" />
              <span>Morph</span>
              <Key>0.0 %</Key>
              <span>Mode</span>
              <Picker label="Mode" value="Rate" />
            </div>
            <Knob label="Envelope" value="0.0 %" amount={0.5} />
          </div>
        </div>
        <div className="flex w-[31px] flex-col gap-px px-[3px] pt-px pb-[2px]">
          <Knob label="Drive" value="0.0 %" amount={0} />
          <Picker label="Circuit" value="SVF" />
          <Key className="mt-[2px]">Clip</Key>
          <span className="flex h-[6px] items-center justify-center bg-[#b98a1c] text-[#3b2a08]">-13.98</span>
          <div className="mt-auto">
            <Knob label="Dry/Wet" value="100 %" amount={1} warm />
          </div>
        </div>
      </div>
    </Device>
  );
}

function UtilityRack() {
  return (
    <section className="flex w-[9px] shrink-0 flex-col items-center gap-[2px] bg-[#282050] pt-[2px]">
      <i className="size-[5px] rounded-full bg-[#bfff74]" />
      <i className="mt-[2px] size-[6px] rounded-full border border-[#5e7bc4]" />
      <i className="size-[6px] rounded-full bg-[#4d6fc0]" />
      <i className="size-[6px] rounded-full border-2 border-[#bfff74]" />
      <i className="size-[6px] rounded-full bg-[#4d6fc0]" />
      <span className="mt-[2px] rotate-180 leading-[6px] [writing-mode:vertical-rl]">Utility…</span>
      <RefreshCw size={5} strokeWidth={4} />
      <Save size={5} strokeWidth={4} />
    </section>
  );
}

function Utility() {
  return (
    <Device title="Utility" className="w-[66px]">
      <div className="flex flex-1 justify-between px-[3px] pt-px pb-[2px]">
        <div className="flex w-[27px] flex-col gap-[2px] text-center">
          <span className="leading-[6px]">Input</span>
          <div className="flex gap-px">
            <Key className="flex-1">Ø L</Key>
            <Key className="flex-1">Ø R</Key>
          </div>
          <Picker label="Channel mode" value="Stereo" />
          <Knob label="Width" value="100 %" amount={0.5} />
          <Key>Mono</Key>
          <Key className="mt-auto">Bass Mono</Key>
          <div className="flex gap-px">
            <Key className="flex-1">120 Hz</Key>
            <Key className="w-[7px]">
              <Headphones size={5} strokeWidth={3} />
            </Key>
          </div>
        </div>
        <div className="flex w-[28px] flex-col items-center gap-[3px] border-l border-[#1b1438]">
          <span className="leading-[6px]">Output</span>
          <Knob label="Gain" value="0.00 dB" amount={0.5} />
          <Knob label="Balance" value="C" amount={0.5} />
          <div className="mt-auto flex gap-[2px]">
            <Key>Mute</Key>
            <Key>DC</Key>
          </div>
        </div>
      </div>
    </Device>
  );
}

function Limiter() {
  return (
    <Device title="Limiter" className="ml-px w-[132px]">
      <div className="flex flex-1 gap-[3px] px-[2px] pt-[2px] pb-[2px]">
        <div className="flex w-[27px] flex-col gap-[2px]">
          <Knob label="Input Gain" value="-3.4 dB" amount={0.5} />
          <Key>Maximize</Key>
          <div className="mt-auto">
            <Knob label="Release" value="100 ms" amount={0.6} warm />
          </div>
          <Key>Auto</Key>
        </div>
        <div className="flex min-w-0 flex-1 flex-col bg-[#110a20] px-[5px] pt-[2px]">
          <div className="flex justify-between px-[3px] leading-[6px]">
            <span>Ceiling</span>
            <span className="pr-[3px]">GR</span>
          </div>
          <div className="flex flex-1 justify-between">
            <div className="flex w-[16px] items-end gap-[2px]">
              <i className="mb-[10px] h-px flex-1 bg-[#4fe0a0]" />
              <i className="mb-[9px] h-px flex-1 bg-[#4fe0a0]" />
            </div>
            <i className="mb-[17px] h-0 self-end border-y-2 border-r-4 border-y-transparent border-r-[#ffcf3a]" />
            <div className="flex flex-col justify-between text-center leading-[6px]">
              {["0", "3", "6", "12", "24"].map((n) => (
                <span key={n}>{n}</span>
              ))}
            </div>
            <div className="flex w-[16px] gap-[2px]">
              <i className="flex-1 bg-[#181030]" />
              <i className="flex-1 bg-[#181030]" />
            </div>
          </div>
          <div className="flex justify-between leading-[7px]">
            <span className="text-[#f2c23c]">-8.8 dB</span>
            <span>
              Link <span className="text-[#f2c23c]">100 %</span>
            </span>
          </div>
        </div>
        <div className="flex w-[27px] flex-col gap-[2px] text-center">
          <Knob label="Lookahead" value="1.5      6" amount={0.5} />
          <span className="mt-px leading-[5px]">Mode</span>
          <Key on>Standard</Key>
          <Key>Soft Clip</Key>
          <Key>True Peak</Key>
          <span className="mt-auto leading-[5px]">Routing</span>
          <div className="flex">
            <Key on className="flex-1">L/R</Key>
            <Key className="flex-1">M/S</Key>
          </div>
        </div>
      </div>
    </Device>
  );
}

function EndCap({ className }: { className: string }) {
  return (
    <div className={clsx("shrink-0 bg-[#282050]", className)}>
      <div className="h-[9px] bg-[#303067]" />
    </div>
  );
}

export default function App() {
  return (
    <div className="flex min-h-screen flex-col overflow-hidden bg-[#191232] font-['Inter',sans-serif] text-[5px] leading-[6px] text-[#bdb9d9]">
      <Transport />
      <div className="flex gap-[3px] pr-px">
        <Browser />
        <Arrangement />
      </div>
      <footer className="mt-[3px] flex flex-1">
        <EndCap className="w-[20px]" />
        <Meter quiet />
        <Serum />
        <Meter />
        <Lfo />
        <Meter />
        <Delay />
        <Meter />
        <AutoFilter />
        <Meter />
        <UtilityRack />
        <Utility />
        <Limiter />
        <EndCap className="w-[9px]" />
        <Meter />
        <div className="mr-[3px] ml-[2px] flex min-w-0 flex-1 items-center justify-center rounded-[2px] bg-[#251c48]">
          Drop Audio Effects Here
        </div>
      </footer>
    </div>
  );
}
